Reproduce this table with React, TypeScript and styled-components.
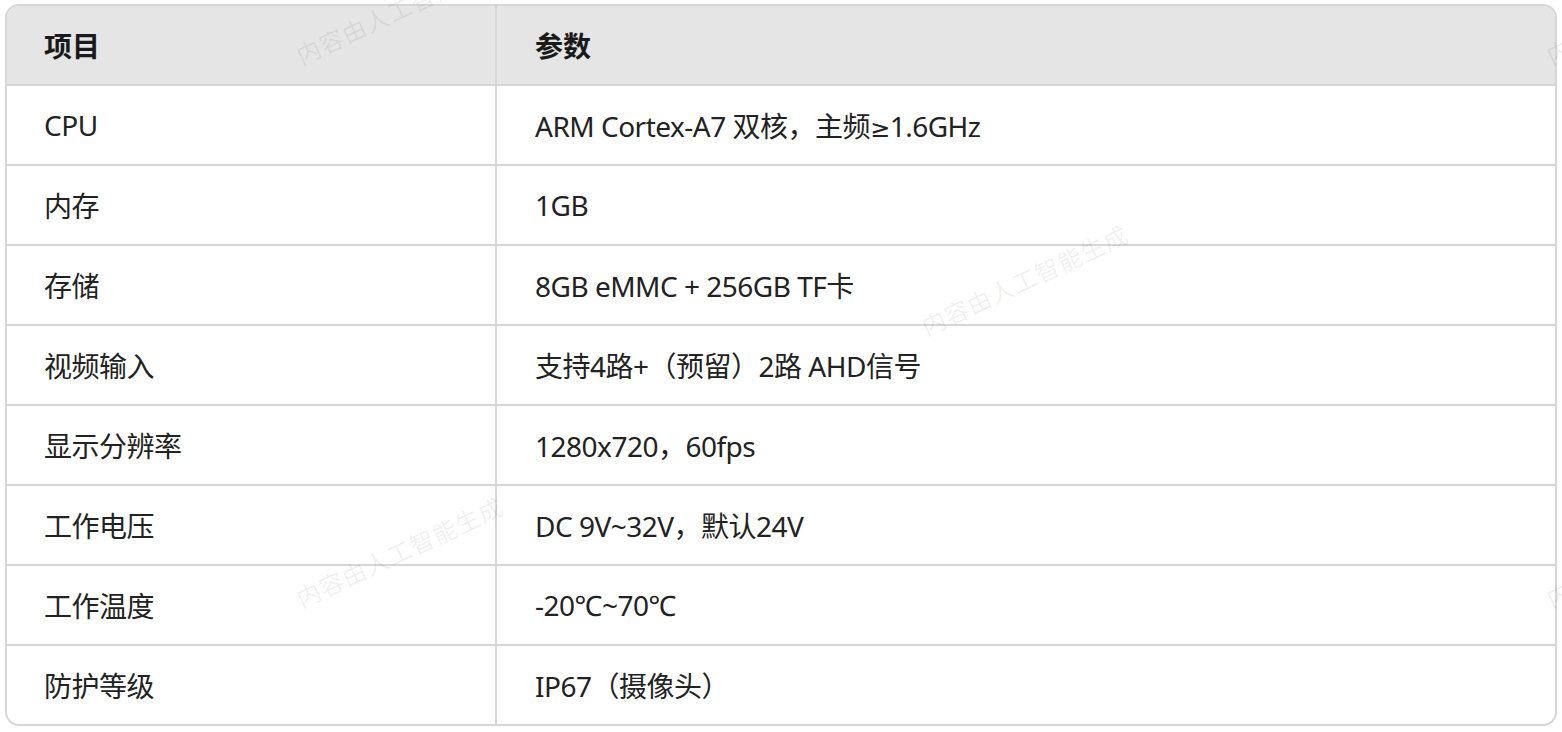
import React from 'react';
import styled, { createGlobalStyle } from 'styled-components';

const Global = createGlobalStyle`
  html, body {
    margin: 0;
    padding: 0;
    background: #ffffff;
  }
  body {
    font-family: "Noto Sans", "Noto Sans CJK SC", sans-serif;
    color: #1a1a1a;
  }
`;

const Page = styled.div`
  position: relative;
  width: 1562px;
  height: 732px;
  padding: 4px 0 0 5px;
  box-sizing: border-box;
  overflow: hidden;
`;

const Frame = styled.div`
  width: 1552px;
  box-sizing: border-box;
  border: 2px solid #d6d6d6;
  border-radius: 14px;
  overflow: hidden;
`;

const Table = styled.table`
  width: 100%;
  border-collapse: separate;
  border-spacing: 0;
  table-layout: fixed;
`;

const HeadCell = styled.th<{ $first?: boolean }>`
  height: 78px;
  padding: 0 0 0 ${(p) => (p.$first ? '37px' : '38px')};
  box-sizing: content-box;
  text-align: left;
  font-size: 28px;
  font-weight: 700;
  color: #1a1a1a;
  background: #e5e5e5;
  border-bottom: 2px solid #d6d6d6;
  border-right: ${(p) => (p.$first ? '2px solid #d6d6d6' : 'none')};
  width: ${(p) => (p.$first ? '451px' : 'auto')};
`;

const Cell = styled.td<{ $first?: boolean; $last?: boolean }>`
  height: 78px;
  padding: 0 0 0 ${(p) => (p.$first ? '37px' : '38px')};
  box-sizing: content-box;
  font-size: 28px;
  font-weight: 400;
  letter-spacing: -0.5px;
  color: #222222;
  white-space: nowrap;
  border-bottom: ${(p) => (p.$last ? 'none' : '2px solid #d6d6d6')};
  border-right: ${(p) => (p.$first ? '2px solid #d6d6d6' : 'none')};
`;

const Symbol = styled.span`
  font-family: "DejaVu Sans", sans-serif;
  font-size: 24px;
`;

const Watermark = styled.span<{ $x: number; $y: number }>`
  position: absolute;
  left: ${(p) => p.$x}px;
  top: ${(p) => p.$y - 26}px;
  font-size: 24px;
  line-height: 1;
  letter-spacing: 1px;
  white-space: nowrap;
  color: rgba(0, 0, 0, 0.07);
  transform-origin: 0 100%;
  transform: rotate(-25deg);
  pointer-events: none;
  user-select: none;
`;

const rows: [string, React.ReactNode][] = [
  ['CPU', <>ARM Cortex-A7 双核，主频<Symbol>≥</Symbol>1.6GHz</>],
  ['内存', '1GB'],
  ['存储', '8GB eMMC + 256GB TF卡'],
  ['视频输入', '支持4路+（预留）2路 AHD信号'],
  ['显示分辨率', '1280x720，60fps'],
  ['工作电压', 'DC 9V~32V，默认24V'],
  ['工作温度', '-20℃~70℃'],
  ['防护等级', 'IP67（摄像头）'],
];

const marks = [
  { x: 303, y: 70 },
  { x: 1553, y: 70 },
  { x: 928, y: 341 },
  { x: 303, y: 613 },
  { x: 1553, y: 613 },
];

export default function App() {
  return (
    <Page>
      <Global />
      <Frame>
        <Table>
          <thead>
            <tr>
              <HeadCell $first>项目</HeadCell>
              <HeadCell>参数</HeadCell>
            </tr>
          </thead>
          <tbody>
            {rows.map(([k, v], i) => (
              <tr key={k}>
                <Cell $first $last={i === rows.length - 1}>
                  {k}
                </Cell>
                <Cell $last={i === rows.length - 1}>{v}</Cell>
              </tr>
            ))}
          </tbody>
        </Table>
      </Frame>
      {marks.map((m, i) => (
        <Watermark key={i} $x={m.x} $y={m.y}>
          内容由人工智能生成
        </Watermark>
      ))}
    </Page>
  );
}
